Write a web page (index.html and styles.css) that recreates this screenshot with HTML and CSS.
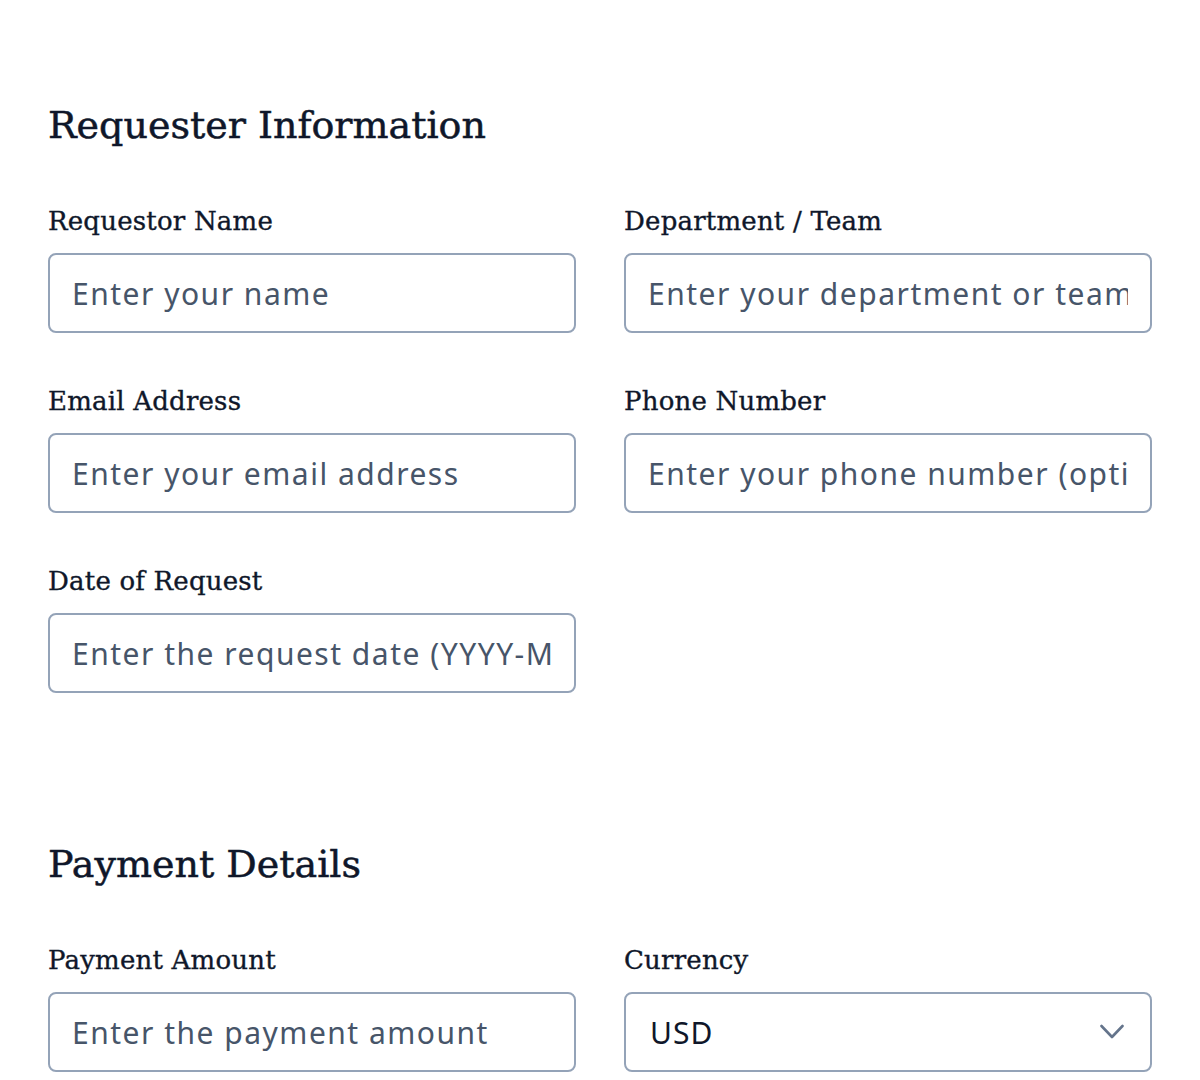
FILE: index.html
```html
<!DOCTYPE html>
<html lang="en">
<head>
<meta charset="utf-8">
<title>Payment Request</title>
<link rel="stylesheet" href="styles.css">
</head>
<body>
<main class="page">
  <section class="section">
    <h2 class="section-title">Requester Information</h2>
    <div class="grid">
      <div class="field">
        <label class="label">Requestor Name</label>
        <input class="input" type="text" placeholder="Enter your name">
      </div>
      <div class="field">
        <label class="label">Department / Team</label>
        <input class="input" type="text" placeholder="Enter your department or team">
      </div>
      <div class="field">
        <label class="label">Email Address</label>
        <input class="input" type="text" placeholder="Enter your email address">
      </div>
      <div class="field">
        <label class="label">Phone Number</label>
        <input class="input" type="text" placeholder="Enter your phone number (optional)">
      </div>
      <div class="field">
        <label class="label">Date of Request</label>
        <input class="input" type="text" placeholder="Enter the request date (YYYY-MM-DD)">
      </div>
    </div>
  </section>
  <section class="section">
    <h2 class="section-title">Payment Details</h2>
    <div class="grid">
      <div class="field">
        <label class="label">Payment Amount</label>
        <input class="input" type="text" placeholder="Enter the payment amount">
      </div>
      <div class="field">
        <label class="label">Currency</label>
        <div class="select">
          <span class="select-value">USD</span>
          <svg class="chevron" width="24" height="24" viewBox="0 0 24 24" fill="none" stroke="#64748b" stroke-width="2.6" stroke-linecap="round" stroke-linejoin="round"><path d="M1.5 6 L12 17 L22.5 6"/></svg>
        </div>
      </div>
    </div>
  </section>
</main>
</body>
</html>
```

FILE: styles.css
```css
* { box-sizing: border-box; }
body {
  margin: 0;
  background: #ffffff;
  color: #0f172a;
}
.page {
  padding: 101px 48px 48px;
}
.section + .section {
  margin-top: 147px;
}
.section-title {
  margin: 0 0 56px;
  font-family: "DejaVu Serif", "Liberation Serif", serif;
  font-weight: 400;
  font-size: 38px;
  line-height: 48px;
  color: #0f172a;
  -webkit-text-stroke: 0.5px #0f172a;
}
.grid {
  display: grid;
  grid-template-columns: 1fr 1fr;
  column-gap: 48px;
  row-gap: 52px;
}
.field {
  display: flex;
  flex-direction: column;
  gap: 16px;
}
.label {
  font-family: "DejaVu Serif", "Liberation Serif", serif;
  font-size: 26px;
  line-height: 32px;
  letter-spacing: 0.2px;
  color: #0f172a;
  -webkit-text-stroke: 0.35px #0f172a;
}
.input, .select {
  width: 100%;
  height: 80px;
  border: 2px solid #94a3b8;
  border-radius: 8px;
  padding: 0 22px;
  font-family: "Noto Sans", "Open Sans", sans-serif;
  font-size: 30px;
  letter-spacing: 1.5px;
  color: #0f172a;
  background: #fff;
  outline: none;
}
.input::placeholder {
  color: #475569;
  opacity: 1;
}
.select {
  display: flex;
  align-items: center;
  justify-content: space-between;
  padding-left: 24px;
  padding-right: 26px;
}
.select-value {
  letter-spacing: 1px;
}
```
